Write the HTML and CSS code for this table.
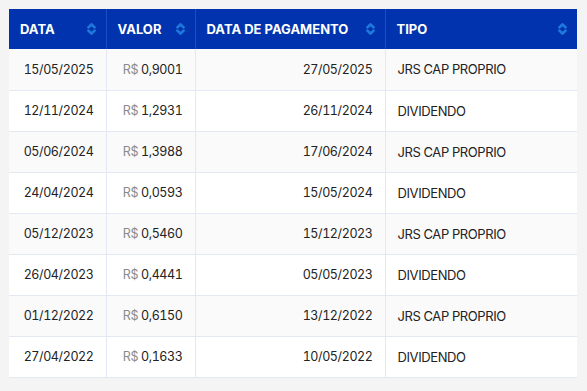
FILE: index.html
```html
<!DOCTYPE html>
<html lang="pt-BR">
<head>
<meta charset="utf-8">
<link rel="stylesheet" href="styles.css">
</head>
<body>
<table class="tbl">
  <thead>
    <tr>
      <th class="c-data"><div class="th-in"><span>DATA</span><svg class="sort" viewBox="0 0 8 13"><path d="M1.2 5 L4 2.2 L6.8 5 M1.2 8 L4 10.8 L6.8 8"/></svg></div></th>
      <th class="c-valor"><div class="th-in"><span>VALOR</span><svg class="sort" viewBox="0 0 8 13"><path d="M1.2 5 L4 2.2 L6.8 5 M1.2 8 L4 10.8 L6.8 8"/></svg></div></th>
      <th class="c-pag"><div class="th-in"><span>DATA DE PAGAMENTO</span><svg class="sort" viewBox="0 0 8 13"><path d="M1.2 5 L4 2.2 L6.8 5 M1.2 8 L4 10.8 L6.8 8"/></svg></div></th>
      <th class="c-tipo"><div class="th-in"><span>TIPO</span><svg class="sort" viewBox="0 0 8 13"><path d="M1.2 5 L4 2.2 L6.8 5 M1.2 8 L4 10.8 L6.8 8"/></svg></div></th>
    </tr>
  </thead>
  <tbody>
    <tr><td class="r">15/05/2025</td><td class="r"><span class="cur">R$</span> 0,9001</td><td class="r">27/05/2025</td><td class="t">JRS CAP PROPRIO</td></tr>
    <tr><td class="r">12/11/2024</td><td class="r"><span class="cur">R$</span> 1,2931</td><td class="r">26/11/2024</td><td class="t">DIVIDENDO</td></tr>
    <tr><td class="r">05/06/2024</td><td class="r"><span class="cur">R$</span> 1,3988</td><td class="r">17/06/2024</td><td class="t">JRS CAP PROPRIO</td></tr>
    <tr><td class="r">24/04/2024</td><td class="r"><span class="cur">R$</span> 0,0593</td><td class="r">15/05/2024</td><td class="t">DIVIDENDO</td></tr>
    <tr><td class="r">05/12/2023</td><td class="r"><span class="cur">R$</span> 0,5460</td><td class="r">15/12/2023</td><td class="t">JRS CAP PROPRIO</td></tr>
    <tr><td class="r">26/04/2023</td><td class="r"><span class="cur">R$</span> 0,4441</td><td class="r">05/05/2023</td><td class="t">DIVIDENDO</td></tr>
    <tr><td class="r">01/12/2022</td><td class="r"><span class="cur">R$</span> 0,6150</td><td class="r">13/12/2022</td><td class="t">JRS CAP PROPRIO</td></tr>
    <tr><td class="r">27/04/2022</td><td class="r"><span class="cur">R$</span> 0,1633</td><td class="r">10/05/2022</td><td class="t">DIVIDENDO</td></tr>
  </tbody>
</table>
</body>
</html>
```
FILE: styles.css
```css
html, body {
  margin: 0;
  padding: 0;
  background: #f4f4f4;
}
body {
  padding: 9px 10px 0 9px;
  font-family: Inter, "Noto Sans", sans-serif;
}
.tbl {
  width: 568px;
  border-collapse: collapse;
  table-layout: fixed;
  background: #fff;
}
th, td { box-sizing: border-box; }
.c-data { width: 97px; }
.c-valor { width: 89px; }
.c-pag { width: 190px; }
.c-tipo { width: 192px; }
thead tr {
  background: #0033ad;
  height: 40px;
}
th {
  color: #fff;
  font-size: 13px;
  font-weight: 700;
  text-align: left;
  padding: 0 10px 0 11px;
  border-left: 1px solid #1a4fc4;
}
th:first-child { border-left: none; }
.th-in {
  display: flex;
  align-items: center;
  justify-content: space-between;
}
.sort {
  width: 9px;
  height: 14px;
  fill: none;
  stroke: #1f78dc;
  stroke-width: 2.6;
  stroke-linecap: round;
  stroke-linejoin: round;
}
tbody tr {
  height: 41px;
  border-top: 1px solid #e3e8f4;
}
tbody tr:first-child { border-top: none; }
tbody tr:nth-child(odd) { background: #fafafa; }
td {
  font-size: 12.5px;
  letter-spacing: -0.4px;
  color: #222;
  padding: 0 12px;
  border-left: 1px solid #e3e8f4;
  white-space: nowrap;
  font-variant-numeric: tabular-nums;
}
td:first-child { border-left: none; }
td.r { text-align: right; }
td.t { font-size: 13px; letter-spacing: -0.4px; }
.cur { color: #8a8a8a; }
tbody tr:last-child { border-bottom: 1px solid #e3e8f4; }
```
